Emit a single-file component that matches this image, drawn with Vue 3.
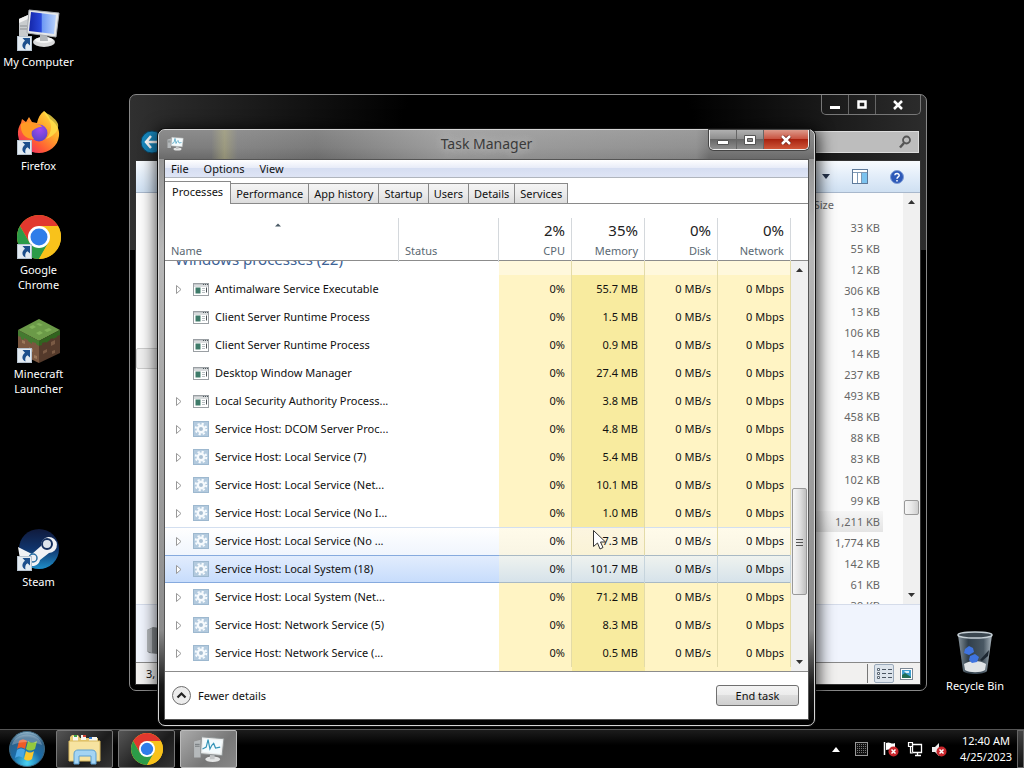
<template>
  <div class="desktop">
    <!-- shared icon shapes -->
    <svg class="defs" aria-hidden="true">
      <defs>
        <linearGradient id="screen" x1="0" y1="0" x2="1" y2="0">
          <stop offset="0" stop-color="#1426a8" />
          <stop offset=".45" stop-color="#2a49dc" />
          <stop offset=".5" stop-color="#6f9af4" />
          <stop offset="1" stop-color="#b9d2fb" />
        </linearGradient>
        <linearGradient id="fox" x1="1" y1="0" x2=".1" y2="1">
          <stop offset="0" stop-color="#fff04a" />
          <stop offset=".4" stop-color="#ffa62b" />
          <stop offset=".7" stop-color="#ff5a35" />
          <stop offset="1" stop-color="#e8207d" />
        </linearGradient>
        <radialGradient id="globe" cx=".55" cy=".3" r=".7">
          <stop offset="0" stop-color="#a14af0" />
          <stop offset="1" stop-color="#5a45c8" />
        </radialGradient>
        <linearGradient id="steamBg" x1="0" y1="0" x2="0" y2="1">
          <stop offset="0" stop-color="#101a3c" />
          <stop offset=".5" stop-color="#10346c" />
          <stop offset="1" stop-color="#1f8fc9" />
        </linearGradient>
        <radialGradient id="orb" cx=".5" cy=".9" r=".9">
          <stop offset="0" stop-color="#48d4f4" />
          <stop offset=".45" stop-color="#1b6ca8" />
          <stop offset=".8" stop-color="#2d5f86" />
          <stop offset="1" stop-color="#9fc1d4" />
        </radialGradient>
        <linearGradient id="glass" x1="0" y1="0" x2="1" y2="0">
          <stop offset="0" stop-color="#8d9aa3" />
          <stop offset=".3" stop-color="#33424e" />
          <stop offset=".75" stop-color="#4d5c68" />
          <stop offset="1" stop-color="#b4c0c8" />
        </linearGradient>
      </defs>
      <symbol id="i-shortcut" viewBox="0 0 15 15">
        <rect x=".5" y=".5" width="14" height="14" fill="#e3ebf2" stroke="#b7c3cf" />
        <path d="M5.500 2H13v7.500l-2.500-2.300C8.500 8.500 7.800 10.500 8.500 13.500 4.500 11.500 4.500 7.500 8 4.700z" fill="#1d4f8c" />
      </symbol>
      <symbol id="i-computer" viewBox="0 0 44 46">
        <path d="M2 13l9-4v24H2z" fill="#c9ccce" />
        <path d="M2 13l9-4v4l-9 4z" fill="#f3f3f3" />
        <path d="M3 20h7M3 23h7" stroke="#8b8f93" />
        <ellipse cx="27" cy="36" rx="11" ry="5" fill="#d9dadb" />
        <ellipse cx="27" cy="34" rx="9" ry="3" fill="#f3f4f4" />
        <path d="M23 27h7l1 8h-8z" fill="#b3b7ba" />
        <path d="M12 4l30 3-3 24-29-4z" fill="#e6e8ea" stroke="#a7abb0" />
        <path d="M14 6l25 3-2 19-25-3z" fill="url(#screen)" />
      </symbol>
      <symbol id="i-firefox" viewBox="0 0 44 46">
        <path d="M27 1c3 3 5 5 6 8 6 4 10 10 9 17-1 10-10 17-20 17S2 36 1 25c-.500-5 1-9 3-12l1-4 4 3 3-5 3 5 5 1c1-5 3-9 7-12z" fill="url(#fox)" />
        <circle cx="22" cy="23" r="8.500" fill="url(#globe)" />
        <path d="M4 14c5-3 11-2 15 1 3-1 5 0 6 2-5 0-7 2-10 4-1 3 0 6 2 8C8 29 3 23 4 14z" fill="#ff9a25" />
        <path d="M27 1c1 6 7 8 7 16 0 5-2 9-5 12 10-4 13-10 12-15-2-5-6-7-8-9-2-1-4-2-6-4z" fill="#ffe14a" opacity=".8" />
      </symbol>
      <symbol id="i-chrome" viewBox="0 0 44 44">
        <circle cx="22" cy="22" r="22" fill="#f8c21b" />
        <path d="M2.950 11a22 22 0 0 1 38.100 0H22L12.500 27.500z" fill="#e1382e" />
        <path d="M2.950 11a22 22 0 0 0 19.050 33L31.500 27.500 12.500 27.500z" fill="#2c9b48" />
        <path d="M22 11h19.050A22 22 0 0 1 22 44l9.500-16.500z" fill="#f8c21b" />
        <circle cx="22" cy="22" r="11" fill="#fff" />
        <circle cx="22" cy="22" r="8.500" fill="#2f7de9" />
      </symbol>
      <symbol id="i-minecraft" viewBox="0 0 44 46">
        <path d="M22 1l21 11-21 11L1 12z" fill="#6b9a48" />
        <path d="M1 12l21 11v22L1 35z" fill="#7a5740" />
        <path d="M43 12L22 23v22l21-10z" fill="#543a2b" />
        <path d="M1 12l21 11v5l-3-2v-1l-4-1v2l-4-3v-1l-4-2v2l-3-1v-2l-3-1z" fill="#447a30" />
        <path d="M43 12L22 23v5l3-1v-2l4-1v1l4-3v-1l3-1v1l4-2v-1l3-1z" fill="#31641f" />
        <path d="M12 9l4-2 3 2-4 2zM22 5l4 2-3 1-4-2zM27 12l5-2 3 2-5 2zM19 15l4-2 3 2-4 2z" fill="#82b35a" />
        <path d="M5 22l3 1v3l-3-1zM12 29l4 2v3l-4-2zM17 37l3 1v3l-3-1z" fill="#9c785a" />
        <path d="M26 33l4-2v3l-4 2zM34 24l4-2v4l-4 2zM35 33l3-1v3l-3 1z" fill="#7a5a44" />
      </symbol>
      <symbol id="i-steam" viewBox="0 0 44 46">
        <circle cx="22" cy="23" r="20" fill="url(#steamBg)" />
        <path d="M1 21l14 7 9-8a8 8 0 1 1 8 7l-9 7c-1 4-4 6-8 6L3 33z" fill="#f0f2f5" />
        <circle cx="30" cy="18" r="5" fill="#dfe5ec" stroke="#16305e" stroke-width="2" />
        <circle cx="16" cy="32" r="4" fill="#eef1f5" stroke="#2a6ea3" stroke-width="1.500" />
      </symbol>
      <symbol id="i-bin" viewBox="0 0 44 46">
        <path d="M5 5h34l-5 36c-3 4-21 4-24 0z" fill="url(#glass)" opacity=".95" />
        <ellipse cx="22" cy="5" rx="17" ry="3" fill="#3b4750" stroke="#c6d0d6" stroke-width="1.500" />
        <path d="M11 34c6-4 16-4 22 0l-1 6c-4 3-16 3-20 0z" fill="#dfe3e6" />
        <path d="M12 19l4-3 4 2 1 4-5 3-5-2zM17 26l5-2 4 3-2 5-5 1-3-3z" fill="#3f74e0" />
        <path d="M27 30l9-10-1 6-6 5z" fill="#1d2731" />
      </symbol>
      <symbol id="i-window" viewBox="0 0 16 13">
        <rect x=".5" y=".5" width="15" height="12" fill="#fff" stroke="#9a9fa3" />
        <path d="M1 1.500h14" stroke="#c3c7ca" />
        <path d="M1 3h14" stroke="#b5babd" />
        <path d="M10 1.500h1M12 1.500h1M14 1.500h1" stroke="#50585d" />
        <path d="M2.500 4.500h5v6h-5z" fill="#3e7a69" />
        <path d="M9 5.500h3M9 7.500h3M9 9.500h3" stroke="#b9bfc3" />
        <path d="M13.500 4.500v5" stroke="#4a5155" />
      </symbol>
      <symbol id="i-gear" viewBox="0 0 16 16">
        <rect x=".5" y=".5" width="15" height="15" fill="#b3cade" stroke="#9db8cf" />
        <circle cx="8" cy="8" r="5.300" fill="none" stroke="#f6fafd" stroke-width="2" stroke-dasharray="2.200 1.963" />
        <circle cx="8" cy="8" r="3.200" fill="#a9bfd2" stroke="#f6fafd" stroke-width="2.400" />
      </symbol>
      <symbol id="i-monitor" viewBox="0 0 34 30">
        <path d="M1 7l7-2v19H1z" fill="#b5b9bb" />
        <path d="M2 10h5M2 12h5" stroke="#6f7477" />
        <ellipse cx="21" cy="26" rx="8" ry="3" fill="#e3e4e4" />
        <path d="M18 20h5v6h-5z" fill="#c3c5c6" />
        <path d="M9 2l24 2-2 18L8 20z" fill="#eceeee" stroke="#8e9395" />
        <path d="M11 4l20 2-2 14-19-2z" fill="#f4fbfd" />
        <path d="M10 15l4-2 2-8 2 10 2-4 2-2 2 5 5-1" fill="none" stroke="#3595b8" stroke-width="1.300" />
      </symbol>
    </svg>

    <div class="icons">
      <button v-for="item in shortcuts" :key="item.icon" class="icon" :class="item.icon">
        <svg width="44" height="46" viewBox="0 0 44 46">
          <use v-if="item.icon === 'chrome'" href="#i-chrome" y="1" width="44" height="44" />
          <use v-else :href="'#i-' + item.icon" width="44" height="46" />
          <use href="#i-shortcut" y="30" width="15" height="15" />
        </svg>
        <span>{{ item.label }}</span>
      </button>
    </div>
    <button class="icon recycle">
      <svg width="44" height="46" viewBox="0 0 44 46"><use href="#i-bin" width="44" height="46" /></svg>
      <span>Recycle Bin</span>
    </button>

    <section class="explorer" aria-label="Explorer">
      <div class="caption">
        <button aria-label="Minimize"><svg width="12" height="10"><path d="M1 6h10v3H1z" fill="#fff" /></svg></button>
        <button aria-label="Maximize"><svg width="12" height="10"><path d="M2.500 1.500h7v6h-7z" fill="none" stroke="#fff" stroke-width="2.500" /></svg></button>
        <button class="close" aria-label="Close"><svg width="12" height="10"><path d="M2 1l8 8M10 1L2 9" stroke="#fff" stroke-width="2.500" /></svg></button>
      </div>
      <div class="nav">
        <button class="back" aria-label="Back">
          <svg width="24" height="24" viewBox="0 0 24 24">
            <circle cx="12" cy="12" r="11" fill="#1787bd" stroke="#0b4260" />
            <path d="M11 6l-5 6 5 6M6 12h12" fill="none" stroke="#fff" stroke-width="2.500" />
          </svg>
        </button>
        <label class="search">
          <input type="text" aria-label="Search" />
          <svg width="14" height="14" viewBox="0 0 14 14">
            <circle cx="8.500" cy="5" r="3.500" fill="none" stroke="#555" stroke-width="1.800" />
            <path d="M6 8l-4 4.500" stroke="#555" stroke-width="2.500" />
          </svg>
        </label>
      </div>
      <div class="pane">
        <div class="toolbar">
          <button aria-label="Change view"><svg width="8" height="5"><path d="M0 0h8L4 5z" fill="#26344c" /></svg></button>
          <button aria-label="Preview pane">
            <svg width="16" height="15" viewBox="0 0 16 15">
              <rect x=".5" y=".5" width="15" height="14" fill="#fff" stroke="#5e7a9a" />
              <path d="M1 3.500h14M5.500 3v11M9.500 3v11" stroke="#7e99b5" />
              <path d="M10 4h5v10h-5z" fill="#7cc3ef" />
            </svg>
          </button>
          <button aria-label="Help">
            <svg width="14" height="14" viewBox="0 0 14 14">
              <circle cx="7" cy="7" r="6.500" fill="#2d59b8" stroke="#7c9bd6" />
              <path d="M4.800 5.300C5 3 9.300 3 9.200 5.500 9.100 7 7 7 7 8.800M7 10v1.600" fill="none" stroke="#fff" stroke-width="1.500" />
            </svg>
          </button>
        </div>
        <div class="files">
          <div class="tree"></div>
          <table>
            <thead>
              <tr><th>Size</th></tr>
            </thead>
            <tbody>
              <tr v-for="(size, i) in sizes" :key="i" :class="{ picked: size === '1,211' }">
                <td>{{ size }} KB</td>
              </tr>
            </tbody>
          </table>
          <div class="scroll">
            <svg class="arrow" width="7" height="4"><path d="M0 4h7L3.500 0z" fill="#333" /></svg>
            <div class="before"></div>
            <div class="thumb"></div>
            <div class="after"></div>
            <svg class="arrow" width="7" height="4"><path d="M0 0h7L3.500 4z" fill="#333" /></svg>
          </div>
        </div>
        <div class="details">
          <svg width="20" height="28" viewBox="0 0 20 28"><path d="M1 3l6-3 13 2v26l-17-2-2-2z" fill="#83888c" /><path d="M1 3l5-2v25l-5-2z" fill="#b5b9bd" /></svg>
        </div>
        <div class="status">
          <span>3,</span>
          <div class="views">
            <button class="on" aria-label="Details">
              <svg width="16" height="13" viewBox="0 0 16 13">
                <path d="M1.500 1.500h2v2h-2zM1.500 5.500h2v2h-2zM1.500 9.500h2v2h-2z" fill="#fff" stroke="#5b6672" />
                <path d="M6 2.500h4M12 2.500h4M6 6.500h4M12 6.500h4M6 10.500h4M12 10.500h4" stroke="#4b5662" />
              </svg>
            </button>
            <button aria-label="Thumbnails">
              <svg width="13" height="12" viewBox="0 0 13 12">
                <rect x=".5" y=".5" width="12" height="11" fill="#fff" stroke="#7b8794" />
                <path d="M2 2h9v8H2z" fill="#3e9fd1" />
                <path d="M2 7l3-2 6 4v1H2z" fill="#1f6d55" />
                <path d="M4 3h5v2H6z" fill="#d7edf7" />
              </svg>
            </button>
          </div>
        </div>
      </div>
    </section>

    <section class="manager" aria-label="Task Manager">
      <header class="title">
        <svg class="app" width="17" height="15" viewBox="0 0 34 30"><use href="#i-monitor" width="34" height="30" /></svg>
        <h1>Task Manager</h1>
        <div class="caption">
          <button aria-label="Minimize"><svg width="12" height="10"><path d="M.5 5.500h11v4H.5z" fill="#fff" stroke="#555" /></svg></button>
          <button aria-label="Maximize"><svg width="12" height="10"><path d="M.5.5h11v9H.5z" fill="#fff" stroke="#555" /><path d="M3.500 3.500h5v3h-5z" fill="#888" stroke="#555" /></svg></button>
          <button class="close" aria-label="Close"><svg width="12" height="10"><path d="M2 1l8 8M10 1L2 9" stroke="#6b2018" stroke-width="4" /><path d="M2 1l8 8M10 1L2 9" stroke="#fff" stroke-width="2.500" /></svg></button>
        </div>
      </header>
      <div class="content">
        <nav class="menu">
          <button v-for="m in menus" :key="m">{{ m }}</button>
        </nav>
        <div class="tabs" role="tablist">
          <button
            v-for="tab in tabs"
            :key="tab"
            role="tab"
            :class="{ active: tab === activeTab }"
            @click="activeTab = tab"
          >
            {{ tab }}
          </button>
        </div>
        <div class="list">
          <table class="processes">
            <thead>
              <tr>
                <th class="sorted">
                  <svg width="6" height="4"><path d="M0 3.500L3 .5l3 3z" fill="#4b5a66" /></svg>
                  Name
                </th>
                <th>Status</th>
                <th v-for="c in usage" :key="c.name" class="num"><b>{{ c.total }}</b>{{ c.name }}</th>
              </tr>
            </thead>
            <tbody>
              <tr class="group">
                <td>Windows processes (22)</td>
                <td></td>
                <td class="num"></td>
                <td class="num"></td>
                <td class="num"></td>
                <td class="num"></td>
              </tr>
              <tr
                v-for="(p, i) in processes"
                :key="i"
                :class="{ hover: i === 9, selected: i === selected }"
                @click="selected = i"
              >
                <td>
                  <span class="expand">
                    <svg v-if="p.open" width="6" height="9"><path d="M.5.5l4.500 4-4.500 4z" fill="#fff" stroke="#999" /></svg>
                  </span>
                  <svg v-if="p.icon === 'gear'" width="16" height="16"><use href="#i-gear" width="16" height="16" /></svg>
                  <svg v-else width="16" height="13"><use href="#i-window" width="16" height="13" /></svg>
                  <span>{{ p.name }}</span>
                </td>
                <td></td>
                <td class="num">0%</td>
                <td class="num mem">{{ p.memory }} MB</td>
                <td class="num">0 MB/s</td>
                <td class="num">0 Mbps</td>
              </tr>
            </tbody>
          </table>
          <div class="rail">
            <div class="corner"></div>
            <div class="scroll">
              <svg class="arrow" width="7" height="4"><path d="M0 4h7L3.500 0z" fill="#333" /></svg>
              <div class="before"></div>
              <div class="thumb">
                <svg width="7" height="8"><path d="M0 1.500h7M0 4.500h7M0 7.500h7" stroke="#555" /></svg>
              </div>
              <div class="after"></div>
              <svg class="arrow" width="7" height="4"><path d="M0 0h7L3.500 4z" fill="#333" /></svg>
            </div>
          </div>
        </div>
        <footer>
          <button class="fewer">
            <svg width="19" height="19" viewBox="0 0 19 19">
              <circle cx="9.500" cy="9.500" r="9" fill="#ececec" stroke="#6d6d6d" />
              <path d="M5.500 11.500l4-4 4 4" fill="none" stroke="#222" stroke-width="2.200" />
            </svg>
            Fewer details
          </button>
          <button class="end">End task</button>
        </footer>
      </div>
    </section>

    <svg class="pointer" width="14" height="21" viewBox="0 0 14 21">
      <path d="M.5.5v16l4-3.500 2.500 6 3-1.500-2.500-5.500h5z" fill="#fff" stroke="#333" />
    </svg>

    <div class="taskbar">
      <button class="start" aria-label="Start">
        <svg width="38" height="38" viewBox="0 0 38 38">
          <circle cx="19" cy="19" r="17.500" fill="url(#orb)" stroke="#3b6680" />
          <path d="M11 11c3-2 5-2 8 0l-2 8c-3-2-5-2-8 0z" fill="#ee5b27" />
          <path d="M20 11c3 2 5 2 9 0l-2 8c-4 2-6 2-9 0z" fill="#93c83e" />
          <path d="M9 20c3-2 5-2 8 0l-2 8c-3-2-5-2-8 0z" fill="#49a6e6" />
          <path d="M18 21c3 2 5 2 8 0l-2 8c-3 2-5 2-8 0z" fill="#fbc72d" />
          <path d="M4 15c3-14 27-14 30 0-9-4-21-4-30 0z" fill="#fff" opacity=".25" />
        </svg>
      </button>
      <button class="task" aria-label="Explorer">
        <svg width="34" height="32" viewBox="0 0 34 32">
          <path d="M2 4l2-2h6l2 3h18v22H2z" fill="#e9cc72" />
          <path d="M5 3h5v5H5zM13 2h5v5h-5zM21 4h8v5h-8z" fill="#f7f7f0" />
          <path d="M6 2h3v2H6z" fill="#3fa548" /><path d="M15 2h3v2h-3z" fill="#d64435" /><path d="M21 4h3v2h-3z" fill="#3c7fd1" />
          <path d="M1 8h31v20H1z" fill="#f7e3a0" stroke="#d9b95f" />
          <path d="M6 31V21c0-3 2-4 4-4h14c3 0 4 2 4 4v10h-5v-8H11v8z" fill="#a4d4f3" stroke="#5d9fd0" />
        </svg>
      </button>
      <button class="task" aria-label="Google Chrome">
        <svg width="32" height="32" viewBox="0 0 44 44"><use href="#i-chrome" width="44" height="44" /></svg>
      </button>
      <button class="task active" aria-label="Task Manager">
        <svg width="32" height="28" viewBox="0 0 34 30"><use href="#i-monitor" width="34" height="30" /></svg>
      </button>
      <div class="tray">
        <button aria-label="Show hidden icons"><svg width="8" height="5"><path d="M0 5h8L4 0z" fill="#fff" /></svg></button>
        <button aria-label="Processor">
          <svg width="13" height="14" viewBox="0 0 13 14">
            <rect x=".5" y=".5" width="12" height="13" fill="#111" stroke="#999" />
            <path d="M2 2.500h9M2 4.500h9M2 6.500h9M2 8.500h9M2 10.500h9" stroke="#777" stroke-dasharray="1 1" />
          </svg>
        </button>
        <button aria-label="Action Center">
          <svg width="16" height="16" viewBox="0 0 16 16">
            <path d="M1.500 1v13" stroke="#fff" stroke-width="1.500" />
            <path d="M3 2c4-2 5 2 9 0v7c-4 2-5-2-9 0z" fill="#fff" />
            <circle cx="10.500" cy="10.500" r="5" fill="#c9262c" />
            <path d="M8.500 8.500l4 4M12.500 8.500l-4 4" stroke="#fff" stroke-width="1.500" />
          </svg>
        </button>
        <button aria-label="Network">
          <svg width="16" height="16" viewBox="0 0 16 16">
            <path d="M5.500 3.500h9v8h-9zM8 14.500h6M10.500 12v2" fill="#000" stroke="#fff" stroke-width="1.300" />
            <path d="M1.500 1.500h4v4h-4zM3.500 6v6h2" fill="#222" stroke="#fff" stroke-width="1.200" />
          </svg>
        </button>
        <button aria-label="Volume">
          <svg width="16" height="16" viewBox="0 0 16 16">
            <path d="M1 6h3l4-4v13l-4-4H1z" fill="#eee" />
            <circle cx="10.500" cy="10.500" r="5" fill="#c9262c" />
            <path d="M8.500 8.500l4 4M12.500 8.500l-4 4" stroke="#fff" stroke-width="1.500" />
          </svg>
        </button>
        <button class="clock"><time>12:40 AM</time><time>4/25/2023</time></button>
        <button class="peek" aria-label="Show desktop"></button>
      </div>
    </div>
  </div>
</template>

<script setup>
import { ref } from 'vue'

const shortcuts = [
  { icon: 'computer', label: 'My Computer' },
  { icon: 'firefox', label: 'Firefox' },
  { icon: 'chrome', label: 'Google Chrome' },
  { icon: 'minecraft', label: 'Minecraft Launcher' },
  { icon: 'steam', label: 'Steam' },
]

const sizes = [
  '33', '55', '12', '306', '13', '106', '14', '237', '493', '458',
  '88', '83', '102', '99', '1,211', '1,774', '142', '61', '39',
]

const menus = ['File', 'Options', 'View']
const tabs = ['Processes', 'Performance', 'App history', 'Startup', 'Users', 'Details', 'Services']
const activeTab = ref('Processes')

const usage = [
  { name: 'CPU', total: '2%' },
  { name: 'Memory', total: '35%' },
  { name: 'Disk', total: '0%' },
  { name: 'Network', total: '0%' },
]

const processes = [
  { name: 'Antimalware Service Executable', memory: '55.7', open: true },
  { name: 'Client Server Runtime Process', memory: '1.5' },
  { name: 'Client Server Runtime Process', memory: '0.9' },
  { name: 'Desktop Window Manager', memory: '27.4' },
  { name: 'Local Security Authority Process...', memory: '3.8', open: true },
  { name: 'Service Host: DCOM Server Proc...', memory: '4.8', open: true, icon: 'gear' },
  { name: 'Service Host: Local Service (7)', memory: '5.4', open: true, icon: 'gear' },
  { name: 'Service Host: Local Service (Net...', memory: '10.1', open: true, icon: 'gear' },
  { name: 'Service Host: Local Service (No I...', memory: '1.0', open: true, icon: 'gear' },
  { name: 'Service Host: Local Service (No ...', memory: '7.3', open: true, icon: 'gear' },
  { name: 'Service Host: Local System (18)', memory: '101.7', open: true, icon: 'gear' },
  { name: 'Service Host: Local System (Net...', memory: '71.2', open: true, icon: 'gear' },
  { name: 'Service Host: Network Service (5)', memory: '8.3', open: true, icon: 'gear' },
  { name: 'Service Host: Network Service (...', memory: '0.5', open: true, icon: 'gear' },
]
const selected = ref(10)
</script>

<style>
body {
  background: #000;
  overflow: hidden;
}
</style>

<style scoped>
.desktop {
  position: relative;
  height: 100vh;
  overflow: hidden;
  background: #000;
  color: #111;
  font: 11px/16px "Noto Sans", "Open Sans", sans-serif;
}

.desktop * {
  box-sizing: border-box;
}

.defs {
  position: absolute;
  width: 0;
  height: 0;
}

svg {
  display: block;
  flex: none;
}

button {
  display: flex;
  align-items: center;
  justify-content: center;
  padding: 0;
  border: 0;
  background: none;
  color: inherit;
  font: inherit;
}

/* desktop icons */
.icons {
  display: grid;
  grid-template-rows: repeat(6, 104px);
  width: 77px;
  padding-top: 6px;
}

.icon {
  flex-direction: column;
  justify-content: flex-start;
  gap: 2px;
  color: #fff;
  line-height: 15px;
  text-shadow: 0 1px 2px #000;
}

.icon span {
  max-width: 76px;
}

.icon.steam {
  grid-row: 6;
}

.recycle {
  position: absolute;
  right: 11px;
  bottom: 75px;
  width: 76px;
}

/* windows */
.explorer,
.manager {
  position: absolute;
  display: flex;
  flex-direction: column;
  padding: 0 5px 5px;
  border: 1px solid #8a8a8a;
  border-radius: 7px;
}

.explorer {
  inset: 94px 97px 77px 129px;
  border-color: #888;
  background: linear-gradient(90deg, #303030, #000 35%, #000 70%, #2c2c2c) top / 100% 155px no-repeat #000;
}

.manager {
  inset: 129px 209px 42px 158px;
  border-color: #d5d5d5;
  background: linear-gradient(#8a8a8a, #b8b8b8 120px, #8c8c8c 500px, #1a1a1a 555px, #000);
  box-shadow: 0 0 0 1px #111, 1px 2px 16px 3px rgba(0, 0, 0, 0.75);
}

.caption {
  display: flex;
  align-self: flex-end;
  border: 1px solid #777;
  border-top: 0;
  border-radius: 0 0 5px 5px;
  overflow: hidden;
}

.caption button {
  width: 27px;
  height: 19px;
  border-right: 1px solid #666;
}

.caption .close {
  width: 44px;
  border-right: 0;
}

.nav {
  display: flex;
  align-items: center;
  justify-content: space-between;
  height: 45px;
  padding: 9px 2px 0 5px;
}

.search {
  display: flex;
  align-items: center;
  width: 220px;
  height: 22px;
  padding-right: 6px;
  border: 1px solid #ddd;
  background: #bdbdbd;
}

.search input {
  flex: 1;
  min-width: 0;
  border: 0;
  background: none;
}

.pane {
  display: flex;
  flex: 1;
  flex-direction: column;
  min-height: 0;
  border: 1px solid #333;
  background: #fcfcfc;
}

.toolbar {
  display: flex;
  align-items: center;
  justify-content: flex-end;
  gap: 22px;
  height: 32px;
  padding-right: 16px;
  border-bottom: 1px solid #a8b8cc;
  background: linear-gradient(#f8fbfe, #e2edf9 50%, #cfe0f2);
}

.files {
  display: flex;
  flex: 1;
  min-height: 0;
  overflow: hidden;
}

.tree {
  width: 60px;
  height: 21px;
  margin-top: 155px;
  border: 1px solid #ccc;
  border-radius: 2px;
  background: #eee;
}

.files table {
  flex: 1;
  align-self: flex-start;
  border-spacing: 0;
  color: #666;
}

.files th {
  height: 24px;
  padding: 0 69px 0 0;
  font-weight: normal;
  text-align: right;
}

.files tbody tr {
  height: 21px;
}

.files td {
  width: 100%;
  padding: 0 23px 0 0;
  text-align: right;
}

.picked td {
  background: linear-gradient(#f6f6f6, #e4e4e4) left / calc(100% - 20px) 100% no-repeat;
}

.scroll {
  display: flex;
  flex: 1;
  flex-direction: column;
  align-items: center;
  padding: 7px 1px;
  background: #f0f0f0;
}

.files .scroll {
  flex: none;
  width: 17px;
}

.thumb {
  display: flex;
  align-items: center;
  justify-content: center;
  width: 100%;
  height: 15px;
  border: 1px solid #999;
  border-radius: 2px;
  background: linear-gradient(90deg, #f6f6f6, #e8e8e8 50%, #cfcfcf);
}

.files .before {
  flex: 298;
}

.files .after {
  flex: 78;
}

.details {
  height: 58px;
  padding: 22px 10px;
  border-top: 1px solid #d5dcea;
  background: #f0f4fd;
}

.status {
  display: flex;
  align-items: center;
  justify-content: space-between;
  height: 22px;
  padding: 0 4px 0 10px;
  border-top: 1px solid #888;
  background: #f1f0ef;
}

.views {
  display: flex;
  gap: 2px;
  padding-left: 6px;
  border-left: 1px solid #777;
}

.views button {
  width: 20px;
  height: 19px;
}

.views .on {
  border: 1px solid #9aa9ba;
  border-radius: 2px;
  background: #dde4ec;
}

/* task manager */
.title {
  display: grid;
  grid-template-columns: 1fr auto 1fr;
  align-items: start;
  height: 29px;
  margin: 0 -5px;
  padding: 0 5px;
  border-radius: 6px 6px 0 0;
  background:
    linear-gradient(90deg, transparent 8%, rgba(200, 195, 130, 0.4) 10%, rgba(150, 150, 150, 0.3) 12%, rgba(110, 110, 110, 0.2) 24%, rgba(190, 190, 190, 0.5) 44%, rgba(190, 190, 190, 0.3) 82%, transparent 84%),
    linear-gradient(#8c8c8c, #7e7e7e 60%, #6a6a6a);
}

.title .app {
  margin: 6px 0 0 3px;
}

h1 {
  margin: 0;
  color: #3a3a3a;
  font-size: 14px;
  font-weight: normal;
  line-height: 28px;
  text-shadow: 0 0 8px #bbb, 0 0 12px #bbb;
}

.title .caption {
  align-self: start;
  justify-self: end;
  border-color: #eee;
  box-shadow: 0 0 0 1px #444;
}

.title .caption button {
  background: linear-gradient(#b0b0b0, #8d8d8d 48%, #666 50%, #8f8f8f);
}

.title .caption .close {
  background: linear-gradient(#dd9a8b, #c8513e 48%, #a92310 50%, #cf5639);
}

.content {
  display: flex;
  flex: 1;
  flex-direction: column;
  min-height: 0;
  border: 1px solid #555;
  background: #fff;
}

.menu {
  display: flex;
  gap: 15px;
  height: 18px;
  padding-left: 6px;
  border-bottom: 1px solid #b0b5bd;
  background: linear-gradient(#fff, #e8ecf8 45%, #d6def2 50%, #dfe5f5);
}

.tabs {
  display: flex;
  align-items: flex-end;
  height: 26px;
  background: linear-gradient(#8a8a8a, #8a8a8a) bottom / 100% 1px no-repeat;
}

.tabs button {
  height: 21px;
  padding: 0 5px;
  border: 1px solid #898989;
  border-left-width: 0;
  background: linear-gradient(#f4f4f4, #ebebeb 50%, #dcdcdc);
}

.tabs .active {
  height: 23px;
  padding: 0 7px 3px;
  border-bottom: 0;
  background: #fff;
}

.list {
  display: flex;
  flex: 1;
  min-height: 0;
}

.processes {
  display: flex;
  flex: 1;
  flex-direction: column;
  min-width: 0;
}

.processes tr {
  display: grid;
  flex: none;
  grid-template-columns: minmax(0, 1fr) 100px repeat(4, 73px);
}

.processes thead {
  border-bottom: 1px solid #8c8c8c;
}

.processes thead,
.processes tbody {
  display: flex;
  flex-direction: column;
}

.processes thead tr {
  height: 56px;
}

.processes th {
  display: flex;
  flex-direction: column;
  justify-content: flex-end;
  margin-top: 14px;
  padding: 0 5px 4px 6px;
  border-right: 1px solid #d4d8dc;
  color: #5a6872;
  font-weight: normal;
  line-height: 15px;
  text-align: left;
}

.processes .sorted {
  justify-content: space-between;
}

.sorted svg {
  align-self: center;
  margin: 5px 9px 0 0;
}

.processes th b {
  color: #222;
  font-size: 15px;
  font-weight: normal;
  line-height: 25px;
}

.processes tbody {
  flex: 1;
  min-height: 0;
  overflow: hidden;
  /* column tints carry on below the last row */
  background:
    linear-gradient(#f8eb9f, #f8eb9f) right 146px top / 73px 100% no-repeat,
    linear-gradient(#fff4c4, #fff4c4) right / 292px 100% no-repeat;
}

.processes td {
  display: flex;
  align-items: center;
  height: 28px;
  padding: 0 6px;
}

.processes .num {
  justify-content: flex-end;
  padding: 0 6px 0 0;
  border-right: 1px solid #e3dba8;
  text-align: right;
}

.processes th.num {
  padding-bottom: 4px;
  border-color: #d4d8dc;
}

.processes td.num {
  background: #fff4c4;
}

.processes td.mem {
  background: #f8eb9f;
}

.processes .group td {
  align-items: flex-end;
  height: 14px;
  padding: 0 10px 6px;
  overflow: hidden;
  color: #3c6296;
  font-size: 15px;
  line-height: 20px;
  white-space: nowrap;
}

.processes .group td.num {
  background: #fff8dc;
}

.expand {
  width: 22px;
  padding-left: 5px;
}

.processes td svg + span {
  margin-left: 6px;
  white-space: nowrap;
}

.processes .hover td {
  background: linear-gradient(#fff, #f0f5fd);
  box-shadow: inset 0 1px #d3dff0;
}

.processes .hover td.num {
  background: linear-gradient(#fffbea, #f9f5e4);
}

.processes .hover td.mem {
  background: linear-gradient(#fcf5e0, #faf3d6);
}

.processes .selected td {
  background: linear-gradient(#e3edfd, #c6dcfc);
  box-shadow: inset 0 1px #86aade, inset 0 -1px #86aade;
}

.processes .selected td.num {
  border-color: #c6d4dc;
  background: linear-gradient(#f0f3ef, #d5e2ea);
  box-shadow: inset 0 1px #a9b9c4, inset 0 -1px #a9b9c4;
}

.rail {
  display: flex;
  flex-direction: column;
  width: 17px;
}

.corner {
  height: 57px;
  border-bottom: 1px solid #8c8c8c;
}

.rail .before {
  flex: 217;
}

.rail .thumb {
  flex: 105;
  background: linear-gradient(90deg, #f6f6f6, #e2e2e2 50%, #bfbfbf);
}

.rail .after {
  flex: 65;
}

footer {
  display: flex;
  align-items: center;
  justify-content: space-between;
  height: 48px;
  padding: 0 9px 0 7px;
  border-top: 1px solid #8c8c8c;
}

.fewer {
  gap: 7px;
}

.end {
  width: 83px;
  height: 21px;
  border: 1px solid #707070;
  border-radius: 3px;
  background: linear-gradient(#f4f4f4, #ebebeb 48%, #dddddd 50%, #cfcfcf);
}

.pointer {
  position: absolute;
  top: 530px;
  left: 593px;
}

/* taskbar */
.taskbar {
  position: absolute;
  inset: auto 0 0;
  display: flex;
  gap: 5px;
  height: 39px;
  border-top: 1px solid #555;
  background: linear-gradient(#1c1c1c, #000 40%);
  color: #fff;
}

.start {
  width: 51px;
  padding-left: 3px;
}

.task {
  width: 57px;
  border: 1px solid #777;
  border-radius: 2px;
  background: linear-gradient(135deg, #555, #1c1c1c 60%, #333);
}

.task.active {
  border-color: #bbb;
  background: linear-gradient(135deg, #aaa, #777 60%, #888);
}

.tray {
  display: flex;
  flex: 1;
  align-items: center;
  justify-content: flex-end;
  gap: 8px;
}

.tray button:nth-child(-n + 2) {
  margin-right: 7px;
}

.clock {
  flex-direction: column;
  width: 62px;
}

.peek {
  align-self: stretch;
  width: 7px;
  margin-left: -8px;
  border: 1px solid #666;
  background: linear-gradient(#444, #111);
}
</style>
